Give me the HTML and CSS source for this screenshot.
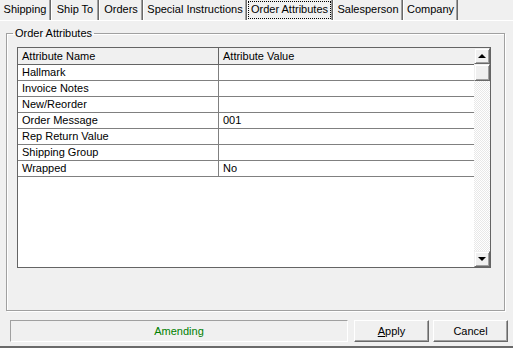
FILE: index.html
```html
<!DOCTYPE html>
<html>
<head>
<meta charset="utf-8">
<link rel="stylesheet" href="styles.css">
</head>
<body>
<div class="window">
  <div class="tabs">
    <div class="tab w-shipping">Shipping</div>
    <div class="tab w-shipto">Ship To</div>
    <div class="tab w-orders">Orders</div>
    <div class="tab w-special">Special Instructions</div>
    <div class="tab active w-attr"><span class="focus">Order Attributes</span></div>
    <div class="tab w-sales">Salesperson</div>
    <div class="tab w-company">Company</div>
  </div>
  <fieldset class="group">
    <legend>Order Attributes</legend>
    <div class="grid">
      <div class="table">
        <div class="row head"><div class="c1">Attribute Name</div><div class="c2">Attribute Value</div></div>
        <div class="row"><div class="c1">Hallmark</div><div class="c2"></div></div>
        <div class="row"><div class="c1">Invoice Notes</div><div class="c2"></div></div>
        <div class="row"><div class="c1">New/Reorder</div><div class="c2"></div></div>
        <div class="row"><div class="c1">Order Message</div><div class="c2">001</div></div>
        <div class="row"><div class="c1">Rep Return Value</div><div class="c2"></div></div>
        <div class="row"><div class="c1">Shipping Group</div><div class="c2"></div></div>
        <div class="row"><div class="c1">Wrapped</div><div class="c2">No</div></div>
      </div>
      <div class="vscroll">
        <div class="sbtn"><span class="arrow up"></span></div>
        <div class="sbtn thumb"></div>
        <div class="track"></div>
        <div class="sbtn"><span class="arrow down"></span></div>
      </div>
    </div>
  </fieldset>
  <div class="footer">
    <div class="status">Amending</div>
    <button class="btn"><u>A</u>pply</button>
    <button class="btn">Cancel</button>
  </div>
</div>
</body>
</html>
```

FILE: styles.css
```css
* { box-sizing: border-box; }
html, body { margin: 0; padding: 0; }
body {
  width: 513px;
  height: 348px;
  overflow: hidden;
  background: #f0f0f0;
  font-family: "Liberation Sans", Arial, sans-serif;
  font-size: 11px;
  color: #000;
}
.window {
  height: 348px;
  display: flex;
  flex-direction: column;
  border-bottom: 2px solid #6a6a6a;
}
.tabs {
  display: flex;
  height: 21px;
  border-bottom: 1px solid #fff;
}
.tab {
  height: 20px;
  line-height: 19px;
  padding: 0;
  text-align: center;
  border-left: 1px solid #fff;
  border-right: 1px solid #696969;
  box-shadow: inset -1px 0 0 #a0a0a0;
  white-space: nowrap;
  flex: none;
}
.tab:first-child { border-left: none; }
.w-shipping { width: 51px; }
.w-shipto { width: 48px; }
.w-orders { width: 44px; }
.w-special { width: 104px; }
.w-attr { width: 86px; }
.w-sales { width: 70px; }
.w-company { width: 55px; }
.tab.active { padding: 1px 1px 0 0; line-height: 17px; }
.focus {
  display: block;
  height: 18px;
  outline: 1px dotted #000;
  outline-offset: -1px;
}
.group {
  margin: 6px 8px 0 6px;
  padding: 7px 11px 0 10px;
  border: 1px solid #a0a0a0;
  box-shadow: 1px 1px 0 #fff, inset 1px 1px 0 #fff;
  height: 284px;
  min-width: 0;
}
.group legend {
  margin-left: -4px;
  padding: 0 2px;
  line-height: 13px;
}
.grid {
  display: flex;
  width: 474px;
  height: 221px;
  border: 1px solid #646464;
  background: #fff;
}
.table { flex: 1; }
.row {
  display: flex;
  height: 16px;
  line-height: 15px;
  border-bottom: 1px solid #808080;
}
.row.head {
  height: 17px;
  line-height: 16px;
  background: #f0f0f0;
  border-bottom-color: #646464;
}
.c1 {
  width: 201px;
  padding-left: 4px;
  border-right: 1px solid #808080;
}
.head .c1 { border-right-color: #646464; }
.c2 { flex: 1; padding-left: 4px; }
.vscroll {
  width: 16px;
  display: flex;
  flex-direction: column;
}
.sbtn {
  height: 16px;
  background: #f0f0f0;
  border: 1px solid;
  border-color: #f0f0f0 #696969 #696969 #f0f0f0;
  box-shadow: inset 1px 1px 0 #fff, inset -1px -1px 0 #a0a0a0;
  display: flex;
  align-items: center;
  justify-content: center;
}
.thumb { height: 17px; }
.track {
  flex: 1;
  background-color: #fff;
  background-image: repeating-conic-gradient(#e8e8e8 0 25%, #fff 0 50%);
  background-size: 2px 2px;
}
.arrow {
  width: 0;
  height: 0;
  border-left: 4px solid transparent;
  border-right: 4px solid transparent;
}
.arrow.up { border-bottom: 4px solid #000; }
.arrow.down { border-top: 4px solid #000; }
.footer {
  display: flex;
  margin: 9px 5px 0 10px;
  height: 22px;
}
.status {
  width: 338px;
  border: 1px solid;
  border-color: #a0a0a0 #fff #fff #a0a0a0;
  color: #008000;
  text-align: center;
  line-height: 20px;
}
.btn {
  width: 75px;
  height: 22px;
  margin-left: 6px;
  padding: 0;
  font: inherit;
  color: #000;
  background: #f0f0f0;
  border: 1px solid;
  border-color: #fff #696969 #696969 #fff;
  box-shadow: inset -1px -1px 0 #a0a0a0;
}
.btn + .btn { margin-left: 4px; }
```
